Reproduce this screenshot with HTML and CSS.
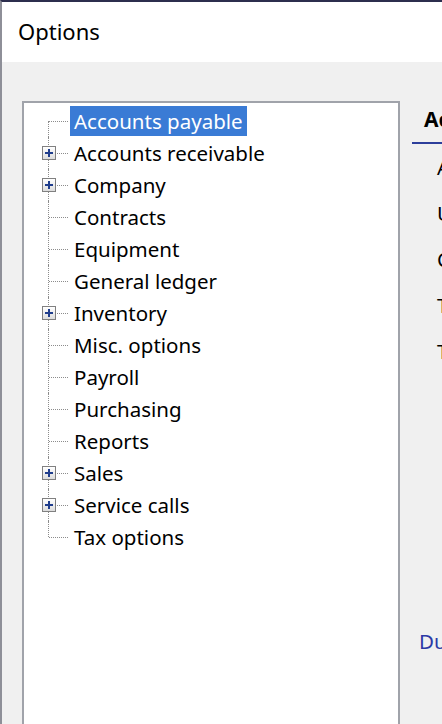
FILE: index.html
```html
<!DOCTYPE html>
<html lang="en">
<head>
    <meta charset="UTF-8">
    <title>Options</title>
    <link rel="stylesheet" href="styles.css">
</head>
<body>
    <div class="window">
        <div class="titlebar">
            <span class="title">Options</span>
        </div>
        <div class="content">
            <div class="tree">
                <ul class="tree-list">
                    <li class="node first"><span class="twig"></span><span class="label selected">Accounts payable</span></li>
                    <li class="node"><span class="twig"><span class="expander"></span></span><span class="label">Accounts receivable</span></li>
                    <li class="node"><span class="twig"><span class="expander"></span></span><span class="label">Company</span></li>
                    <li class="node"><span class="twig"></span><span class="label">Contracts</span></li>
                    <li class="node"><span class="twig"></span><span class="label">Equipment</span></li>
                    <li class="node"><span class="twig"></span><span class="label">General ledger</span></li>
                    <li class="node"><span class="twig"><span class="expander"></span></span><span class="label">Inventory</span></li>
                    <li class="node"><span class="twig"></span><span class="label">Misc. options</span></li>
                    <li class="node"><span class="twig"></span><span class="label">Payroll</span></li>
                    <li class="node"><span class="twig"></span><span class="label">Purchasing</span></li>
                    <li class="node"><span class="twig"></span><span class="label">Reports</span></li>
                    <li class="node"><span class="twig"><span class="expander"></span></span><span class="label">Sales</span></li>
                    <li class="node"><span class="twig"><span class="expander"></span></span><span class="label">Service calls</span></li>
                    <li class="node last"><span class="twig"></span><span class="label">Tax options</span></li>
                </ul>
            </div>

            <div class="panel">
                <div class="panel-title">Accounts payable</div>
                <div class="panel-rows">
                    <div class="row">Automatically post invoices</div>
                    <div class="row">Use purchase order numbers</div>
                    <div class="row">Check printing format</div>
                    <div class="row">Terms default</div>
                    <div class="row">Tax default</div>
                </div>
                <a class="panel-link" href="#">Due date defaults</a>
            </div>
        </div>
    </div>
</body>
</html>
```

FILE: styles.css
```css
html, body {
    margin: 0;
    height: 100%;
    overflow: hidden;
}

body {
    background: #f0f0f0;
    font-family: 'Noto Sans', 'Open Sans', Arial, sans-serif;
    color: #000;
}

.window {
    height: 100%;
    border-top: 2px solid #2c2e4e;
    border-left: 2px solid #8e8f98;
    box-sizing: border-box;
    overflow: hidden;
}

/* 제목 표시줄 */
.titlebar {
    height: 60px;
    background: #fff;
    padding-left: 16px;
    display: flex;
    align-items: center;
}

.title {
    font-size: 22px;
    margin-top: -2px;
}

.content {
    display: flex;
    padding: 39px 0 0 20px;
}

/* 트리 영역 */
.tree {
    flex: none;
    width: 378px;
    height: 625px;
    box-sizing: border-box;
    border: 2px solid #a0a3aa;
    background: #fff;
}

.tree-list {
    list-style: none;
    margin: 0;
    padding: 2px 0 0;
}

.node {
    display: flex;
    align-items: center;
    height: 32px;
}

.twig {
    position: relative;
    flex: none;
    width: 46px;
    align-self: stretch;
}

.twig::before {
    content: "";
    position: absolute;
    left: 24px;
    top: 0;
    bottom: 0;
    border-left: 1px dotted #8c8c8c;
}

.first .twig::before {
    top: 50%;
}

.last .twig::before {
    bottom: 50%;
}

.twig::after {
    content: "";
    position: absolute;
    left: 25px;
    right: 2px;
    top: 50%;
    border-top: 1px dotted #8c8c8c;
}

.expander {
    position: absolute;
    z-index: 1;
    left: 18px;
    top: 50%;
    margin-top: -7px;
    width: 12px;
    height: 12px;
    border: 1px solid #808080;
    background: linear-gradient(#ffffff, #dcdcdc);
}

.expander::before,
.expander::after {
    content: "";
    position: absolute;
    background: #1f3d8c;
}

.expander::before {
    left: 2px;
    right: 2px;
    top: 5px;
    height: 2px;
}

.expander::after {
    top: 2px;
    bottom: 2px;
    left: 5px;
    width: 2px;
}

.label {
    font-size: 20.5px;
    line-height: 30px;
    padding: 0 4px;
    white-space: nowrap;
}

.label.selected {
    background: #3a7bd5;
    color: #fff;
}

/* 오른쪽 설정 패널 */
.panel {
    flex: 1;
    min-width: 0;
    margin-left: 12px;
    overflow: hidden;
    white-space: nowrap;
}

.panel-title {
    font-size: 21px;
    font-weight: bold;
    line-height: 30px;
    padding: 3px 0 8px 12px;
    border-bottom: 2px solid #2d3e9b;
}

.row {
    height: 46px;
    line-height: 46px;
    padding-left: 25px;
    font-size: 20.5px;
}

.panel-link {
    display: block;
    margin-top: 252px;
    padding-left: 7px;
    font-size: 20.5px;
    line-height: 30px;
    color: #2b3aa6;
    text-decoration: none;
}
```
